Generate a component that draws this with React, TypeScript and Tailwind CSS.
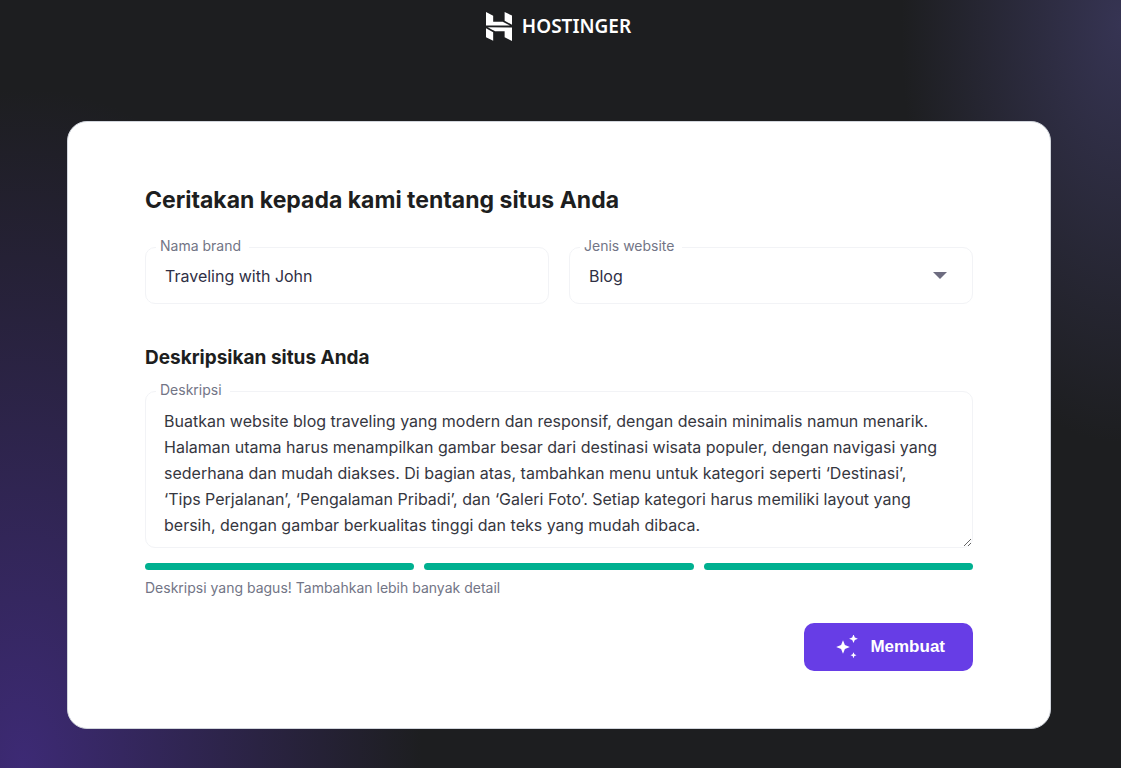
import { useState } from 'react';

const BRAND_TYPES = ['Blog', 'Toko online', 'Portofolio', 'Bisnis'];

const DEFAULT_DESCRIPTION =
  'Buatkan website blog traveling yang modern dan responsif, dengan desain minimalis namun menarik. Halaman utama harus menampilkan gambar besar dari destinasi wisata populer, dengan navigasi yang sederhana dan mudah diakses. Di bagian atas, tambahkan menu untuk kategori seperti ‘Destinasi’, ‘Tips Perjalanan’, ‘Pengalaman Pribadi’, dan ‘Galeri Foto’. Setiap kategori harus memiliki layout yang bersih, dengan gambar berkualitas tinggi dan teks yang mudah dibaca.';

const Logo = () => (
  <div className="flex items-center gap-2.5 text-white">
    <svg className="h-[29px] w-[26px]" viewBox="1.8 0 20.4 24" preserveAspectRatio="none" fill="currentColor" aria-hidden="true">
      <path d="M16.415 0v7.16l5.785 3.384V2.949L16.415 0ZM1.8 0v11.237h18.815L14.89 8.09l-7.457-.003V3.024L1.8 0Zm14.615 20.894v-5.019l-7.514-.005c.007.033-5.82-3.197-5.82-3.197l19.119.091V24l-5.785-3.106ZM1.8 13.551v7.343l5.633 2.949v-6.988L1.8 13.551Z" />
    </svg>
    <span className="pb-0.5 font-['Noto_Sans',sans-serif] text-[19px] leading-6 font-semibold">HOSTINGER</span>
  </div>
);

const SparkleIcon = () => (
  <svg className="h-6 w-6" viewBox="0 0 24 24" fill="currentColor" aria-hidden="true">
    <path d="M7 5.2 8.9 10.1 13.8 12 8.9 13.9 7 18.8 5.1 13.9 0.2 12 5.1 10.1Z" />
    <path d="M17.5 -0.7 18.8 2.4 21.9 3.7 18.8 5 17.5 8.1 16.2 5 13.1 3.7 16.2 2.4Z" />
    <path d="M17.5 17.2 18.4 19.3 20.5 20.2 18.4 21.1 17.5 23.2 16.6 21.1 14.5 20.2 16.6 19.3Z" />
  </svg>
);

const App = () => {
  const [brand, setBrand] = useState('Traveling with John');
  const [type, setType] = useState('Blog');
  const [description, setDescription] = useState(DEFAULT_DESCRIPTION);

  const handleSubmit = (e: React.FormEvent) => {
    e.preventDefault();
  };

  return (
    <div className="min-h-screen bg-[#1d1e20] bg-[radial-gradient(ellipse_220px_420px_at_100%_3%,#363453,transparent),radial-gradient(ellipse_400px_680px_at_2%_100%,#3d2a75,transparent)] font-['Inter',sans-serif]">
      <header className="flex justify-center pt-3 pr-1">
        <Logo />
      </header>

      <main className="pt-20 pr-[70px] pb-[39px] pl-[67px]">
        <form onSubmit={handleSubmit} className="rounded-[20px] border border-gray-300 bg-white px-[77px] pt-[62px] pb-[57px]">
          <h1 className="text-[23px] leading-8 font-bold text-[#1d1e20]">Ceritakan kepada kami tentang situs Anda</h1>

          <div className="mt-[21px] grid grid-cols-2 gap-5">
            <fieldset className="min-w-0 rounded-[10px] border border-[#f2f3f6]">
              <legend className="ml-2.5 h-5 pr-2 pl-1 text-sm leading-[18px] text-[#727586]">
                <label htmlFor="brand">Nama brand</label>
              </legend>
              <input
                id="brand"
                type="text"
                value={brand}
                onChange={(e) => setBrand(e.target.value)}
                className="block h-[46px] w-full px-[19px] pb-2 text-base text-[#2f2f45] outline-none"
              />
            </fieldset>

            <fieldset className="min-w-0 rounded-[10px] border border-[#f2f3f6]">
              <legend className="ml-2.5 h-5 pr-2 pl-1 text-sm leading-[18px] text-[#727586]">
                <label htmlFor="type">Jenis website</label>
              </legend>
              <div className="relative">
                <select
                  id="type"
                  value={type}
                  onChange={(e) => setType(e.target.value)}
                  className="block h-[46px] w-full appearance-none px-[19px] pb-2 text-base text-[#2f2f45] outline-none"
                >
                  {BRAND_TYPES.map((t) => (
                    <option key={t} value={t}>{t}</option>
                  ))}
                </select>
                <svg className="pointer-events-none absolute top-[15px] right-[25px] h-[7px] w-3.5" viewBox="0 0 14 7" fill="#6d6c80" aria-hidden="true">
                  <path d="M0 0H14L7 7Z" />
                </svg>
              </div>
            </fieldset>
          </div>

          <h2 className="mt-10 text-[19px] leading-7 font-bold text-[#1d1e20]">Deskripsikan situs Anda</h2>

          <fieldset className="mt-[9px] min-w-0 rounded-[10px] border border-[#f2f3f6]">
            <legend className="ml-2.5 h-5 pr-2 pl-1 text-sm leading-[18px] text-[#727586]">
              <label htmlFor="description">Deskripsi</label>
            </legend>
            <textarea
              id="description"
              rows={5}
              value={description}
              onChange={(e) => setDescription(e.target.value)}
              className="block w-full resize overflow-hidden pt-[7px] pr-7 pb-[9px] pl-[18px] text-base leading-[26px] text-[#36373f] outline-none"
            />
          </fieldset>

          {/* description strength */}
          <div className="mt-[15px] grid grid-cols-3 gap-2.5">
            <div className="h-[7px] rounded-full bg-[#00b090]" />
            <div className="h-[7px] rounded-full bg-[#00b090]" />
            <div className="h-[7px] rounded-full bg-[#00b090]" />
          </div>
          <p className="mt-2 text-sm leading-5 text-[#727586]">Deskripsi yang bagus! Tambahkan lebih banyak detail</p>

          <div className="mt-[25px] flex justify-end">
            <button
              type="submit"
              className="flex h-12 items-center gap-2.5 rounded-[10px] bg-[#673de6] pr-7 pl-8 font-['Liberation_Sans',sans-serif] text-[17px] font-bold text-white"
            >
              <SparkleIcon />
              Membuat
            </button>
          </div>
        </form>
      </main>
    </div>
  );
};

export default App;
